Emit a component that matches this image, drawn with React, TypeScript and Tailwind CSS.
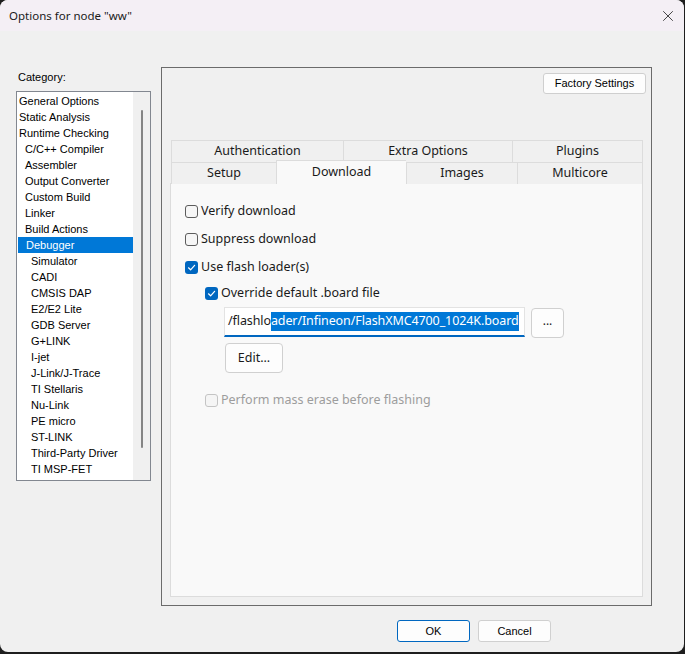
import { X } from "lucide-react";

const categories: [string, number][] = [
  ["General Options", 0],
  ["Static Analysis", 0],
  ["Runtime Checking", 0],
  ["C/C++ Compiler", 1],
  ["Assembler", 1],
  ["Output Converter", 1],
  ["Custom Build", 1],
  ["Linker", 1],
  ["Build Actions", 1],
  ["Debugger", 1],
  ["Simulator", 2],
  ["CADI", 2],
  ["CMSIS DAP", 2],
  ["E2/E2 Lite", 2],
  ["GDB Server", 2],
  ["G+LINK", 2],
  ["I-jet", 2],
  ["J-Link/J-Trace", 2],
  ["TI Stellaris", 2],
  ["Nu-Link", 2],
  ["PE micro", 2],
  ["ST-LINK", 2],
  ["Third-Party Driver", 2],
  ["TI MSP-FET", 2],
];

const indent = ["pl-[2px]", "pl-[8px]", "pl-[14px]"];

function Check({ checked, disabled }: { checked?: boolean; disabled?: boolean }) {
  if (checked) {
    return (
      <span className="flex h-[13px] w-[13px] shrink-0 items-center justify-center rounded-[3px] bg-[#0067c0]">
        <svg width="9" height="9" viewBox="0 0 9 9" fill="none">
          <path d="M1.5 4.8 L3.6 6.8 L7.6 2.3" stroke="white" strokeWidth="1.2" strokeLinecap="round" strokeLinejoin="round" />
        </svg>
      </span>
    );
  }
  return (
    <span
      className={`h-[13px] w-[13px] shrink-0 rounded-[3px] border ${
        disabled ? "border-[#c4c4c4] bg-[#f5f5f5]" : "border-[#5c5c5c] bg-[#f6f6f6]"
      }`}
    />
  );
}

function Option({ label, checked, disabled }: { label: string; checked?: boolean; disabled?: boolean }) {
  return (
    <div className="flex h-[14px] items-center gap-[3px]">
      <Check checked={checked} disabled={disabled} />
      <span className={disabled ? "text-[#9d9d9d]" : "text-[#1a1a1a]"}>{label}</span>
    </div>
  );
}

function Tab({ label, w, active }: { label: string; w: string; active?: boolean }) {
  return (
    <div
      className={`flex items-center justify-center border-l border-t border-[#dcdcdc] ${w} ${
        active ? "-mt-[2px] h-[24px] bg-[#f9f9f9] pb-[1px]" : "h-[22px] bg-[#f0f0f0]"
      }`}
    >
      {label}
    </div>
  );
}

export default function App() {
  return (
    <div className="h-[654px] w-[685px] bg-[#1e1e1e]">
      <div className="flex h-[652px] w-[684px] flex-col overflow-hidden rounded-[8px] bg-[#f0f0f0]">
        <div className="flex h-[31px] shrink-0 items-center justify-between bg-[#f4eff5] pl-[9px] pr-[7px] font-['Noto_Sans',sans-serif] text-[11.5px] text-[#1a1a1a]">
          <span>Options for node "ww"</span>
          <X size={18} strokeWidth={1.1} className="text-[#222]" />
        </div>

        <div className="flex flex-1 flex-col">
          <div className="flex pl-[16px] pt-[36px]">
            <div className="flex w-[135px] flex-col font-['Liberation_Sans',sans-serif] text-[11px] text-black">
              <div className="h-[24px] pl-[2px] pt-[5px] leading-none">Category:</div>
              <div className="flex h-[390px] border border-[#828790] bg-white">
                <div className="flex-1 pt-[1px]">
                  {categories.map(([name, level]) => (
                    <div
                      key={name}
                      className={`flex h-[16px] items-center ${indent[level]} ${
                        name === "Debugger" ? "ml-[1px] bg-[#0078d7] text-white" : ""
                      }`}
                    >
                      {name}
                    </div>
                  ))}
                </div>
                <div className="flex w-[17px] justify-center bg-[#f0f0f0] pt-[18px]">
                  <div className="h-[338px] w-[2px] rounded-full bg-[#858585]" />
                </div>
              </div>
            </div>

            <div className="ml-[10px] flex h-[539px] w-[491px] flex-col border border-[#6b6b6b]">
              <div className="flex justify-end pr-[5px] pt-[5px]">
                <button className="h-[21px] w-[103px] rounded-[3px] border border-[#cfcfcf] bg-[#fdfdfd] font-['Liberation_Sans',sans-serif] text-[11px] text-black">
                  Factory Settings
                </button>
              </div>

              <div className="mt-[46px] flex flex-1 flex-col pb-[8px] pl-[8px] pr-[8px] font-['Noto_Sans',sans-serif] text-[12.5px] text-[#1a1a1a]">
                <div className="ml-[1px] flex border-r border-[#dcdcdc]">
                  <Tab label="Authentication" w="w-[172px]" />
                  <Tab label="Extra Options" w="w-[169px]" />
                  <Tab label="Plugins" w="flex-1" />
                </div>
                <div className="relative z-10 ml-[1px] flex items-end border-r border-[#dcdcdc]">
                  <Tab label="Setup" w="w-[105px]" />
                  <div className="w-[131px] border-r border-[#dcdcdc]">
                    <Tab label="Download" w="w-full" active />
                  </div>
                  <Tab label="Images" w="w-[110px] border-l-0" />
                  <Tab label="Multicore" w="flex-1" />
                </div>
                <div className="-mt-[1px] flex flex-1 flex-col border border-[#dcdcdc] bg-[#f9f9f9] pl-[14px] pt-[20px]">
                  <div className="flex flex-col gap-[14px]">
                    <Option label="Verify download" />
                    <Option label="Suppress download" />
                    <Option label="Use flash loader(s)" checked />
                  </div>
                  <div className="ml-[20px] mt-[12px] flex flex-col">
                    <Option label="Override default .board file" checked />
                    <div className="ml-[19px] mt-[7px] flex items-start gap-[6px]">
                      <div className="flex h-[30px] w-[301px] items-center overflow-hidden whitespace-nowrap border border-b-2 border-[#e3e3e3] border-b-[#0067c0] bg-white pl-[3px] text-[12.5px] tracking-[-0.1px]">
                        <span>/flashlo</span>
                        <span className="bg-[#0078d7] text-white">ader/Infineon/FlashXMC4700_1024K.board</span>
                      </div>
                      <button className="mt-[1px] h-[30px] w-[33px] rounded-[4px] border border-[#d0d0d0] bg-[#fdfdfd] pb-[4px] text-[12px]">
                        ...
                      </button>
                    </div>
                    <button className="ml-[20px] mt-[5px] h-[30px] w-[58px] rounded-[4px] border border-[#d0d0d0] bg-[#fdfdfd] text-[12.5px]">
                      Edit...
                    </button>
                    <div className="mt-[20px]">
                      <Option label="Perform mass erase before flashing" disabled />
                    </div>
                  </div>
                </div>
              </div>
            </div>
          </div>

          <div className="flex gap-[8px] pl-[397px] pt-[14px] font-['Liberation_Sans',sans-serif] text-[11px] text-black">
            <button className="h-[22px] w-[73px] rounded-[3px] border border-[#0067c0] bg-[#fdfdfd]">OK</button>
            <button className="h-[22px] w-[73px] rounded-[3px] border border-[#d0d0d0] bg-[#fdfdfd]">Cancel</button>
          </div>
        </div>
      </div>
    </div>
  );
}
